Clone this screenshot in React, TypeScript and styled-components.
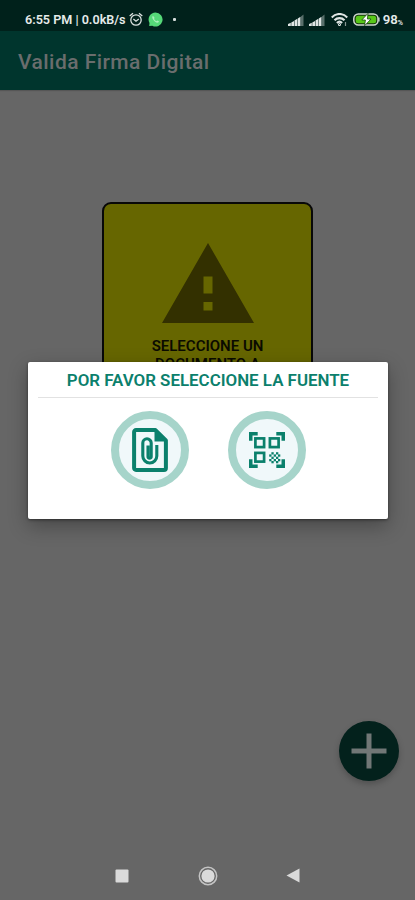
import React from "react";
import styled, { createGlobalStyle } from "styled-components";

const Global = createGlobalStyle`
  html, body { margin: 0; padding: 0; }
  * { box-sizing: border-box; }
`;

const Screen = styled.div`
  position: relative;
  width: 415px;
  height: 900px;
  overflow: hidden;
  display: flex;
  flex-direction: column;
  background: #666666;
  font-family: Roboto, "Liberation Sans", sans-serif;
`;

const StatusBar = styled.header`
  height: 31px;
  flex: none;
  display: flex;
  align-items: center;
  padding: 8px 12px 0 25px;
  background: #00211b;
  color: #e6ebea;
`;

const StatusText = styled.span<{ $size: number; $spacing?: number }>`
  font-size: ${(p) => p.$size}px;
  font-weight: 600;
  line-height: 16px;
  letter-spacing: ${(p) => p.$spacing ?? 0}px;
  white-space: nowrap;
`;

const PercentSign = styled.span`
  align-self: flex-end;
  padding-bottom: 4px;
  font-size: 7px;
  font-weight: 600;
  line-height: 8px;
`;

const Gap = styled.span<{ $w: number }>`
  width: ${(p) => p.$w}px;
  flex: none;
`;

const Spacer = styled.span`
  flex: 1;
`;

const Dot = styled.span`
  width: 3px;
  height: 3px;
  border-radius: 1px;
  background: #d5dddb;
`;

const Icon = styled.svg`
  display: block;
  flex: none;
`;

const AppBar = styled.div`
  height: 59px;
  flex: none;
  display: flex;
  align-items: center;
  padding: 3px 18px 0;
  background: #00352d;
  box-shadow: 0 1px 1px rgba(0, 0, 0, 0.15);
`;

const AppTitle = styled.h1`
  margin: 0;
  font-size: 21px;
  line-height: 28px;
  font-weight: 500;
  letter-spacing: 0.45px;
  color: #6a6d6d;
`;

const Content = styled.main`
  flex: 1;
  display: flex;
  flex-direction: column;
  align-items: center;
  padding-top: 112px;
`;

const WarningCard = styled.section`
  width: 211px;
  height: 211px;
  display: flex;
  flex-direction: column;
  align-items: center;
  padding-top: 39px;
  border: 2px solid #080808;
  border-radius: 9px;
  background: #666600;
`;

const WarningText = styled.p`
  margin: 15px 0 0;
  width: 150px;
  text-align: center;
  font-size: 15px;
  line-height: 17.5px;
  font-weight: 600;
  color: #0b0b00;
`;

const Dialog = styled.div`
  position: absolute;
  left: 28px;
  top: 362px;
  width: 360px;
  height: 157px;
  padding: 0 10px;
  border-radius: 2px;
  background: #ffffff;
  box-shadow: 0 7px 20px rgba(0, 0, 0, 0.3), 0 1px 3px rgba(0, 0, 0, 0.45);
`;

const DialogTitle = styled.h2`
  margin: 0;
  height: 36px;
  border-bottom: 1px solid #e2e2e2;
  text-align: center;
  font-size: 16.9px;
  line-height: 36px;
  font-weight: 600;
  color: #0b806c;
  white-space: nowrap;
`;

const Sources = styled.div`
  display: flex;
  justify-content: center;
  gap: 39px;
  padding-top: 13px;
`;

const SourceButton = styled.button`
  width: 78px;
  height: 78px;
  padding: 0;
  display: flex;
  align-items: center;
  justify-content: center;
  border: 8px solid #a6d4ca;
  border-radius: 50%;
  background: #f0f8fa;
`;

const AddButton = styled.button`
  position: absolute;
  right: 16px;
  top: 721px;
  width: 60px;
  height: 60px;
  padding: 0;
  display: flex;
  align-items: center;
  justify-content: center;
  border: 0;
  border-radius: 50%;
  background: #03211c;
  box-shadow: 0 3px 6px rgba(0, 0, 0, 0.22);
`;

const NavBar = styled.nav`
  height: 50px;
  flex: none;
  display: flex;
  align-items: center;
  justify-content: space-between;
  padding: 1px 115px 0;
`;

const SignalIcon = () => (
  <Icon width="16" height="12" viewBox="0 0 16 12" fill="#dfe5e4">
    <path d="M0 12V10L2.800 8.800V12zM3.300 12V8.500L6 7V12zM6.500 12V6.500L9.300 4.800V12zM9.800 12V4.500L12.500 2.800V12z" />
    <path d="M13 12V2.500L15.500 .5V12z" opacity=".4" />
  </Icon>
);

const AlarmIcon = () => (
  <Icon width="14" height="15" viewBox="0 0 14 15" fill="none" stroke="#dce3e1" strokeWidth="1.3">
    <circle cx="7" cy="8" r="5.2" />
    <path d="M.7 4 4 1.200M13.300 4 10 1.200M4.400 7l2.600 2.200L9.800 7" />
  </Icon>
);

const ChatIcon = () => (
  <Icon width="15" height="15" viewBox="0 0 15 15">
    <path d="M7.500.5a7 7 0 1 1-3.200 13.200L1.200 14l.3-3A7 7 0 0 1 7.500.5z" fill="#55d878" />
    <path
      d="M5 3.800c-1 .7-1.100 2 .1 3.700 1.200 1.800 3 3.300 4.400 3.200.8-.1 1.500-.8 1.400-1.400L9.300 8.500l-.9.800C7.400 8.800 6.400 7.800 6 6.800l.7-.8z"
      fill="#a9efbb"
    />
  </Icon>
);

const WifiIcon = () => (
  <Icon width="17" height="13" viewBox="0 0 17 13" fill="none" stroke="#dfe5e4" strokeWidth="2.1">
    <path d="M.8 4.500C5-.2 12-.2 16.200 4.500M3.500 7.300c2.800-2.900 7.200-2.900 10 0M5.900 9.900c1.500-1.400 3.700-1.400 5.200 0" />
    <circle cx="8.500" cy="11.500" r=".5" />
    <path d="M14.500 9v4" strokeWidth="1.200" opacity=".6" />
  </Icon>
);

const BatteryIcon = () => (
  <Icon width="27" height="13" viewBox="0 0 27 13">
    <rect x=".8" y=".9" width="24.200" height="11.200" rx="4.500" fill="#12300c" stroke="#cfd8d0" strokeWidth="1.500" />
    <rect x="2.700" y="2.700" width="20.500" height="7.600" rx="2.500" fill="#56c718" />
    <path d="M25.900 4.500v4" stroke="#cfd8d0" strokeWidth="1.400" />
    <path d="M15 .3 8.800 7h3.600l-.8 5.700L18 6h-3.600z" fill="#fff" stroke="#1c4a12" strokeWidth=".8" />
  </Icon>
);

const WarningIcon = () => (
  <Icon width="92" height="80" viewBox="0 0 92 80">
    <path
      fillRule="evenodd"
      fill="#333000"
      d="M46 0 92 80H0zM41.500 33.500v17h9v-17zM41.500 59v8.500h9V59z"
    />
  </Icon>
);

const DocumentIcon = () => (
  <Icon width="36" height="44" viewBox="0 0 36 44" fill="none" stroke="#0b806c">
    <path
      d="M4 2.100H23.500L33.900 12.400V40a1.900 1.900 0 0 1-1.900 1.900H4a1.900 1.900 0 0 1-1.900-1.900V4a1.900 1.900 0 0 1 1.900-1.900z"
      strokeWidth="4"
      strokeLinejoin="round"
    />
    <path d="M22.500 1.500V13.500H34.500z" fill="#0b806c" stroke="none" />
    <path
      d="M19.200 15.500V28.500a1.600 1.600 0 0 1-3.200 0V17.500M19.200 28.500V15a4.200 4.200 0 0 0-8.400 0V28a7 7 0 0 0 14 0V17"
      strokeWidth="3.100"
    />
  </Icon>
);

const qrDots = [
  [22.4, 20.2], [27, 20.2], [20.2, 22.4], [24.7, 22.4], [29, 22.4], [22.4, 24.7],
  [27, 24.7], [20.2, 27], [24.7, 27], [29, 27], [22.4, 29], [27, 29],
];

const QrIcon = () => (
  <Icon width="36" height="36" viewBox="0 0 36 36" fill="none" stroke="#0b806c" strokeWidth="3.500">
    <path d="M1.750 8.700V1.750H8.700M27.300 1.750h6.950V8.700M34.250 27.300v6.950h-6.950M8.700 34.250h-6.950v-6.950" />
    <g strokeWidth="2.700">
      <rect x="6.400" y="6.400" width="8.700" height="8.700" />
      <rect x="20.900" y="6.400" width="8.700" height="8.700" />
      <rect x="6.400" y="20.900" width="8.700" height="8.700" />
    </g>
    <g fill="#0b806c" stroke="none">
      {qrDots.map(([x, y]) => (
        <rect key={`${x}-${y}`} x={x} y={y} width="2.300" height="2.300" />
      ))}
    </g>
  </Icon>
);

export default function App() {
  return (
    <>
      <Global />
      <Screen>
        <StatusBar>
          <StatusText $size={12.6}>6:55 PM | 0.0kB/s</StatusText>
          <Gap $w={3} />
          <AlarmIcon />
          <Gap $w={5} />
          <ChatIcon />
          <Gap $w={10} />
          <Dot />
          <Spacer />
          <SignalIcon />
          <Gap $w={5} />
          <SignalIcon />
          <Gap $w={6} />
          <WifiIcon />
          <Gap $w={5} />
          <BatteryIcon />
          <Gap $w={3} />
          <StatusText $size={13.2}>98</StatusText>
          <PercentSign>%</PercentSign>
        </StatusBar>
        <AppBar>
          <AppTitle>Valida Firma Digital</AppTitle>
        </AppBar>
        <Content>
          <WarningCard>
            <WarningIcon />
            <WarningText>SELECCIONE UN DOCUMENTO A</WarningText>
          </WarningCard>
        </Content>
        <NavBar>
          <Icon width="14" height="14" viewBox="0 0 14 14">
            <rect x=".5" y=".5" width="13" height="13" rx="1" fill="#dadada" />
          </Icon>
          <Icon width="20" height="20" viewBox="0 0 20 20">
            <circle cx="10" cy="10" r="8.700" fill="none" stroke="#c4c4c4" strokeWidth="1.500" />
            <circle cx="10" cy="10" r="6.600" fill="#dadada" />
          </Icon>
          <Icon width="14" height="15" viewBox="0 0 14 15">
            <path d="M13.500 .5V14.500L.5 7.500z" fill="#dadada" />
          </Icon>
        </NavBar>
        <AddButton aria-label="Agregar">
          <Icon width="36" height="36" viewBox="0 0 36 36" stroke="#717776" strokeWidth="5">
            <path d="M18 .5v35M.5 18h35" />
          </Icon>
        </AddButton>
        <Dialog role="dialog">
          <DialogTitle>POR FAVOR SELECCIONE LA FUENTE</DialogTitle>
          <Sources>
            <SourceButton aria-label="Archivo">
              <DocumentIcon />
            </SourceButton>
            <SourceButton aria-label="Código QR">
              <QrIcon />
            </SourceButton>
          </Sources>
        </Dialog>
      </Screen>
    </>
  );
}
